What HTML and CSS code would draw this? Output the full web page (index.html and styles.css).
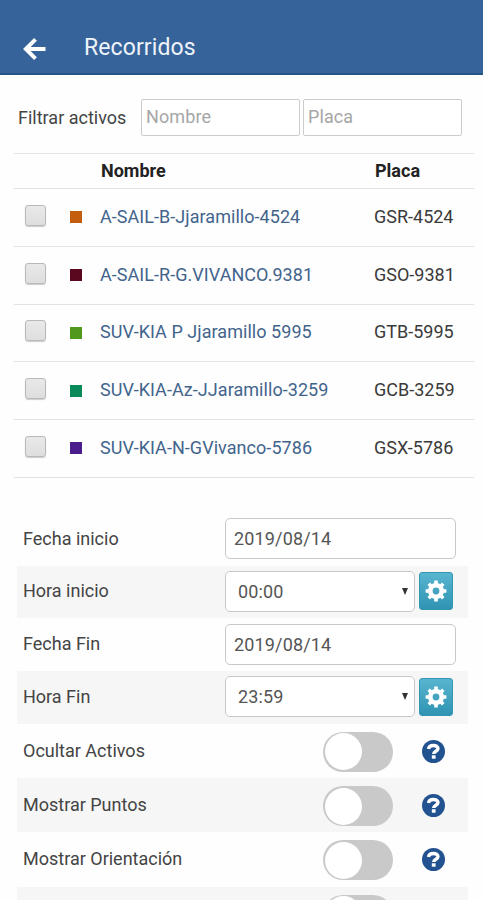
FILE: index.html
```html
<!DOCTYPE html>
<html lang="es">
<head>
<meta charset="utf-8">
<title>Recorridos</title>
<link rel="stylesheet" href="styles.css">
</head>
<body>
<svg class="defs" width="0" height="0" aria-hidden="true">
  <symbol id="gear" viewBox="0 0 22 22">
    <circle cx="11" cy="11" r="5.700" fill="none" stroke="#fff" stroke-width="4.600"/>
    <path stroke="#fff" stroke-width="3.600" d="M11 .6v4M11 17.400v4M.6 11h4M17.400 11h4M3.700 3.700l2.700 2.700M15.600 15.600l2.700 2.700M3.700 18.300l2.700-2.700M15.600 6.400l2.700-2.700"/>
  </symbol>
  <symbol id="help" viewBox="0 0 22 22">
    <circle cx="11" cy="11" r="11" fill="#22528f"/>
    <path fill="none" stroke="#fff" stroke-width="3.300" d="M6.200 8.700C6.800 4.100 15.300 4.200 15.300 8.200c0 2.600-4.100 2.400-4.100 5.100"/>
    <path fill="#fff" d="M9.400 14.600h3.600v3.300H9.400z"/>
  </symbol>
</svg>
<header class="bar">
  <svg class="back" viewBox="0 0 24 24" width="24" height="24"><path d="M22.500 12H3M12.500 2.300 2.800 12l9.700 9.700" fill="none" stroke="#fff" stroke-width="3.900"/></svg>
  <h1 class="title">Recorridos</h1>
</header>
<main>
  <div class="filter">
    <label class="filter-label">Filtrar activos</label>
    <input class="filter-input" placeholder="Nombre">
    <input class="filter-input" placeholder="Placa">
  </div>
  <section class="assets">
    <div class="asset head"><span></span><span></span><span class="th">Nombre</span><span class="th">Placa</span></div>
    <div class="asset"><i class="check"></i><i class="swatch orange"></i><a class="name">A-SAIL-B-Jjaramillo-4524</a><span class="plate">GSR-4524</span></div>
    <div class="asset"><i class="check"></i><i class="swatch maroon"></i><a class="name">A-SAIL-R-G.VIVANCO.9381</a><span class="plate">GSO-9381</span></div>
    <div class="asset"><i class="check"></i><i class="swatch green"></i><a class="name">SUV-KIA P Jjaramillo 5995</a><span class="plate">GTB-5995</span></div>
    <div class="asset"><i class="check"></i><i class="swatch teal"></i><a class="name">SUV-KIA-Az-JJaramillo-3259</a><span class="plate">GCB-3259</span></div>
    <div class="asset"><i class="check"></i><i class="swatch purple"></i><a class="name">SUV-KIA-N-GVivanco-5786</a><span class="plate">GSX-5786</span></div>
  </section>
  <section class="form">
    <div class="row"><span class="label">Fecha inicio</span><div class="field date">2019/08/14</div></div>
    <div class="row"><span class="label">Hora inicio</span><div class="field time">00:00<i class="caret"></i></div><button class="gear"><svg width="22" height="22"><use href="#gear"/></svg></button></div>
    <div class="row"><span class="label">Fecha Fin</span><div class="field date">2019/08/14</div></div>
    <div class="row"><span class="label">Hora Fin</span><div class="field time">23:59<i class="caret"></i></div><button class="gear"><svg width="22" height="22"><use href="#gear"/></svg></button></div>
    <div class="row tall"><span class="label">Ocultar Activos</span><i class="switch"></i><svg class="help" width="23" height="23"><use href="#help"/></svg></div>
    <div class="row tall"><span class="label">Mostrar Puntos</span><i class="switch"></i><svg class="help" width="23" height="23"><use href="#help"/></svg></div>
    <div class="row tall"><span class="label">Mostrar Orientación</span><i class="switch"></i><svg class="help" width="23" height="23"><use href="#help"/></svg></div>
    <div class="row tall"><span class="label"></span><i class="switch"></i></div>
  </section>
</main>
</body>
</html>
```
FILE: styles.css
```css
* { box-sizing: border-box; }
html, body { height: 900px; overflow: hidden; }
body { margin: 0; background: #fefefe; font-family: Roboto, "Liberation Sans", sans-serif; font-size: 18px; color: #444; }
.defs { display: block; height: 0; }
.bar { height: 75px; display: flex; align-items: flex-start; padding: 0 0 0 23px; background: #37639b; border-bottom: 2px solid #235587; }
.back { margin-top: 37px; }
.title { margin: 34px 0 0 37px; font-size: 23px; line-height: 28px; font-weight: 400; letter-spacing: .1px; color: #eef3fa; }
.filter { display: flex; align-items: center; height: 78px; padding: 7px 0 0 18px; }
.filter-label { width: 123px; }
.filter-input { width: 159px; height: 37px; margin: 0 3px 0 0; padding: 0 4px 2px; border: 1px solid #ccc; border-radius: 2px; background: #fff; font: 18px Roboto, sans-serif; letter-spacing: .1px; }
.filter-input::placeholder { color: #a6a6a6; opacity: 1; }
.assets { margin: 0 9px 0 14px; border-top: 1px solid #e4e4e4; }
.asset { display: grid; grid-template-columns: 56px 30px 274px 1fr; align-items: center; height: 57.75px; border-bottom: 1px solid #e2e2e2; }
.head { height: 35px; font-weight: 700; color: #222; }
.th { padding: 0 0 2px 1px; }
.check { width: 21px; height: 21px; margin: 0 0 4px 11px; border: 1px solid #b9b9b9; border-radius: 3px; background: linear-gradient(#e9e9e9, #dedede); box-shadow: 0 1px 1px #ccc; }
.swatch { width: 12px; height: 12px; }
.orange { background: #c35c0c; }
.maroon { background: #5a0820; }
.green { background: #50991c; }
.teal { background: #0b8a59; }
.purple { background: #4b1c8b; }
.name, .plate { padding-bottom: 2px; }
.name { color: #42648c; letter-spacing: .05px; }
.plate { color: #3a3a3a; }
.form { margin: 35px 15px 0 17px; }
.row { display: flex; align-items: center; height: 52.75px; padding-left: 6px; }
.row:nth-child(even) { background: #f6f6f6; }
.tall { height: 54.25px; }
.label { width: 202px; padding-bottom: 2px; white-space: nowrap; }
.tall .label { width: 300px; padding-bottom: 1px; }
.field { position: relative; height: 41px; margin-bottom: 1px; padding: 0 8px; border: 1px solid #c8c8c8; border-radius: 5px; background: #fff; line-height: 39px; color: #555; letter-spacing: .15px; }
.date { width: 231px; }
.time { width: 190px; padding-left: 12px; }
.caret { position: absolute; right: 6px; top: 16px; border: 3.500px solid transparent; border-top: 7px solid #333; border-bottom: 0; }
.gear { width: 34px; height: 38px; margin: 0 0 1px 4px; padding: 0; display: grid; place-items: center; border: 1px solid #3396b4; border-radius: 3px; background: linear-gradient(#58b5d0, #2f94b2); }
.switch { position: relative; width: 70px; height: 40px; margin-top: 2px; border-radius: 20px; background: #c9c9c9; }
.switch::after { content: ""; position: absolute; left: 1.500px; top: 1.500px; width: 37px; height: 37px; border-radius: 50%; background: #fff; }
.help { margin: 1px 0 0 29px; }
```
